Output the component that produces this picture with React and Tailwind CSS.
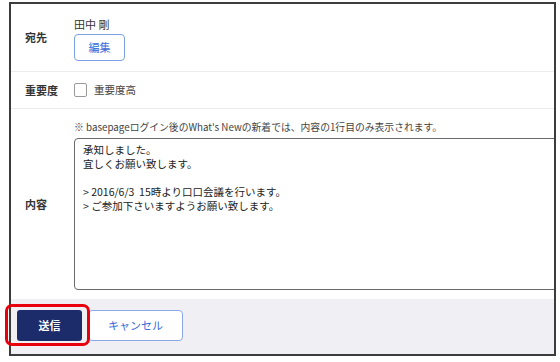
import React from 'react';

const font = { fontFamily: '"Noto Sans CJK JP", "Noto Sans", sans-serif' };

const Label = ({ children }) => (
  <div className="w-[63px] shrink-0 pl-[14px] text-[11px] font-bold text-[#333]">{children}</div>
);

export default function App() {
  const body = '承知しました。\n宜しくお願い致します。\n\n> 2016/6/3  15時より口口会議を行います。\n> ご参加下さいますようお願い致します。';

  return (
    <div className="w-[560px] h-[362px] bg-white pl-[9px] pt-[2px]" style={font}>
      <div className="relative w-[547px] h-[354px] border-2 border-[#3c3c3c] bg-white flex flex-col">
        <div className="h-[68px] flex items-center border-b border-[#ededed]">
          <Label>宛先</Label>
          <div className="flex flex-col items-start pt-[2px]">
            <div className="text-[11px] leading-[16px] text-[#333]">田中 剛</div>
            <button className="mt-[2px] w-[51px] h-[27px] rounded border border-[#7d9fe6] text-[11px] text-[#3a6ad8] bg-white">
              編集
            </button>
          </div>
        </div>

        <div className="h-[37px] flex items-center border-b border-[#ededed]">
          <Label>重要度</Label>
          <label className="flex items-center gap-[7px]">
            <span className="w-[13px] h-[14px] border border-[#999] rounded-[2px] bg-white" />
            <span className="text-[10.5px] text-[#444]">重要度高</span>
          </label>
        </div>

        <div className="h-[190px] flex items-center overflow-hidden">
          <Label>内容</Label>
          <div className="flex flex-col pt-[1px]">
            <div className="text-[9.8px] leading-[16px] text-[#444] whitespace-nowrap">
              ※ basepageログイン後のWhat's Newの新着では、内容の1行目のみ表示されます。
            </div>
            <textarea
              readOnly
              value={body}
              className="mt-[3px] w-[520px] h-[152px] resize-none rounded border border-[#6a6a6a] px-2 py-1 text-[10.5px] leading-[14px] text-[#222] bg-white outline-none"
              style={font}
            />
          </div>
        </div>

        <div className="flex-1 bg-[#f0f0f4] pl-[6px] pt-[11px] flex items-start gap-[6px]">
          <div className="relative">
            <button className="w-[65px] h-[31px] rounded-[3px] bg-[#1c2c6b] text-white text-[11px] font-bold">
              送信
            </button>
            <div className="absolute left-[-12px] top-[-6px] w-[85px] h-[42px] rounded-[7px] border-[3.5px] border-[#e8000f]" />
          </div>
          <button className="w-[95px] h-[31px] rounded border border-[#8aa8e8] bg-white text-[11px] text-[#3a6ad8]">
            キャンセル
          </button>
        </div>
      </div>
    </div>
  );
}
